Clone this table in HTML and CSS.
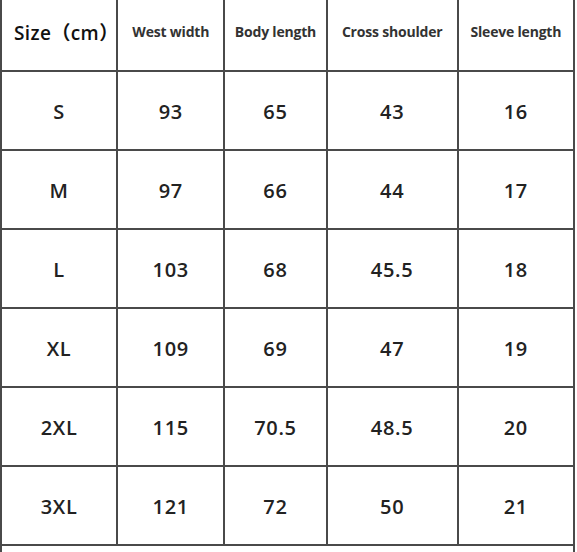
FILE: index.html
```html
<!DOCTYPE html>
<html>
<head>
<meta charset="utf-8">
<link rel="stylesheet" href="styles.css">
</head>
<body>
<div class="sheet">
<table class="size-table">
  <colgroup>
    <col class="c1"><col class="c2"><col class="c3"><col class="c4"><col class="c5">
  </colgroup>
  <thead>
    <tr>
      <th class="size-head">Size（cm）</th>
      <th>West width</th>
      <th>Body length</th>
      <th>Cross shoulder</th>
      <th>Sleeve length</th>
    </tr>
  </thead>
  <tbody>
    <tr><td>S</td><td>93</td><td>65</td><td>43</td><td>16</td></tr>
    <tr><td>M</td><td>97</td><td>66</td><td>44</td><td>17</td></tr>
    <tr><td>L</td><td>103</td><td>68</td><td>45.5</td><td>18</td></tr>
    <tr><td>XL</td><td>109</td><td>69</td><td>47</td><td>19</td></tr>
    <tr><td>2XL</td><td>115</td><td>70.5</td><td>48.5</td><td>20</td></tr>
    <tr><td>3XL</td><td>121</td><td>72</td><td>50</td><td>21</td></tr>
    <tr class="note"><td colspan="5"></td></tr>
  </tbody>
</table>
</div>
</body>
</html>
```

FILE: styles.css
```css
html, body {
  margin: 0;
  padding: 0;
  background: #ffffff;
}

.sheet {
  width: 577px;
  height: 552px;
  overflow: hidden;
}

.size-table {
  margin-top: -9px;
  margin-left: 0;
  border-collapse: collapse;
  table-layout: fixed;
  width: 575px;
  font-family: "Open Sans", "Noto Sans CJK SC", sans-serif;
  color: #222;
}

.c1 { width: 116px; }
.c2 { width: 107px; }
.c3 { width: 102px; }
.c4 { width: 131px; }
.c5 { width: 116px; }

.size-table th,
.size-table td {
  border: 2px solid #4a4a4a;
  text-align: center;
  vertical-align: middle;
  padding: 0;
  height: 77px;
}

.size-table th {
  font-size: 14px;
  font-weight: 700;
  color: #333;
  letter-spacing: -0.2px;
  white-space: nowrap;
}

.size-table th.size-head {
  font-size: 19px;
  font-weight: 600;
  color: #111;
  letter-spacing: 0.4px;
  padding-left: 12px;
  text-align: left;
}

.size-table td {
  font-size: 20px;
  font-weight: 600;
  letter-spacing: 0.7px;
  padding-top: 2px;
  height: 75px;
}

.size-table tr.note td {
  height: 40px;
}
```
